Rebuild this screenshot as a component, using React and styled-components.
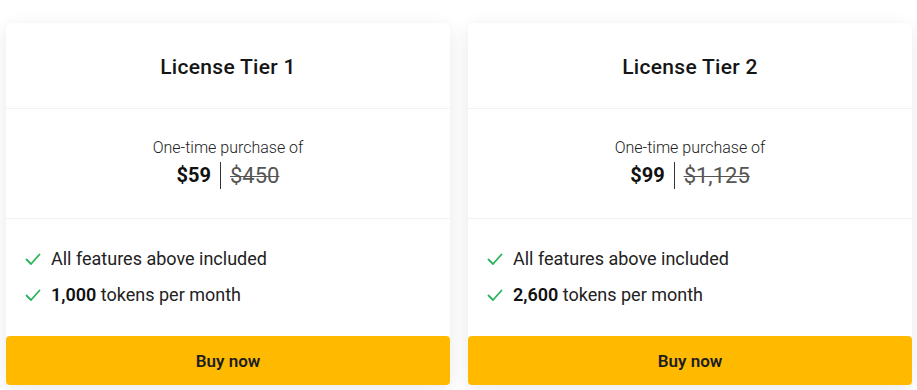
import React from "react";
import styled, { createGlobalStyle } from "styled-components";

const Global = createGlobalStyle`
  html, body { margin: 0; padding: 0; background: #ffffff; }
  body { font-family: Roboto, "Liberation Sans", Arial, sans-serif; color: #1f1f1f; }
  * { box-sizing: border-box; }
`;

const Page = styled.div`
  display: grid;
  grid-template-columns: 444px 444px;
  gap: 18px;
  padding: 23px 5px 0 6px;
  height: 390px;
  overflow: hidden;
`;

const Card = styled.div`
  background: #fff;
  border-radius: 6px;
  box-shadow: 0 4px 18px rgba(0, 0, 0, 0.09);
  display: flex;
  flex-direction: column;
  height: 362px;
`;

const Header = styled.div`
  height: 86px;
  display: flex;
  align-items: center;
  justify-content: center;
  border-bottom: 1px solid #f2f2f2;
`;

const Title = styled.h2`
  margin: 0;
  font-size: 21px;
  font-weight: 500;
  letter-spacing: 0.3px;
  color: #151515;
  transform: translateY(1px);
`;

const PriceBlock = styled.div`
  height: 110px;
  display: flex;
  flex-direction: column;
  align-items: center;
  justify-content: center;
  border-bottom: 1px solid #f2f2f2;
  padding-top: 0;
`;

const Caption = styled.div`
  font-size: 16px;
  font-weight: 300;
  color: #222;
  line-height: 20px;
`;

const PriceRow = styled.div`
  display: flex;
  align-items: center;
  margin-top: 4px;
`;

const Price = styled.span`
  font-size: 20px;
  font-weight: 700;
  color: #111;
  padding-right: 9px;
  border-right: 1px solid #333;
  line-height: 27px;
`;

const OldPrice = styled.span`
  font-size: 22px;
  font-weight: 400;
  color: #555;
  text-decoration: line-through;
  text-decoration-thickness: 1px;
  padding-left: 9px;
`;

const Features = styled.ul`
  list-style: none;
  margin: 0;
  padding: 29px 0 0 19px;
  flex: 1;
  display: flex;
  flex-direction: column;
  gap: 14px;
`;

const Feature = styled.li`
  display: flex;
  align-items: center;
  gap: 10px;
  font-size: 18px;
  font-weight: 400;
  color: #222;
  line-height: 22px;
  b { font-weight: 600; color: #111; }
`;

const Button = styled.button`
  height: 49px;
  border: none;
  border-radius: 4px;
  background: #ffba00;
  color: #1d1d1d;
  font-family: Roboto, "Liberation Sans", Arial, sans-serif;
  font-size: 17px;
  font-weight: 600;
  cursor: pointer;
`;

const Check = () => (
  <svg width="16" height="14" viewBox="0 0 16 14" fill="none" stroke="#2cb45a" strokeWidth="1.8" strokeLinecap="round" strokeLinejoin="round">
    <path d="M1.5 7.5l4.5 4.5L14.5 2.5" />
  </svg>
);

const tiers = [
  { name: "License Tier 1", price: "$59", old: "$450", tokens: "1,000" },
  { name: "License Tier 2", price: "$99", old: "$1,125", tokens: "2,600" },
];

export default function App() {
  return (
    <>
      <Global />
      <Page>
        {tiers.map((t) => (
          <Card key={t.name}>
            <Header>
              <Title>{t.name}</Title>
            </Header>
            <PriceBlock>
              <Caption>One-time purchase of</Caption>
              <PriceRow>
                <Price>{t.price}</Price>
                <OldPrice>{t.old}</OldPrice>
              </PriceRow>
            </PriceBlock>
            <Features>
              <Feature>
                <Check />
                <span>All features above included</span>
              </Feature>
              <Feature>
                <Check />
                <span>
                  <b>{t.tokens}</b> tokens per month
                </span>
              </Feature>
            </Features>
            <Button>Buy now</Button>
          </Card>
        ))}
      </Page>
    </>
  );
}
